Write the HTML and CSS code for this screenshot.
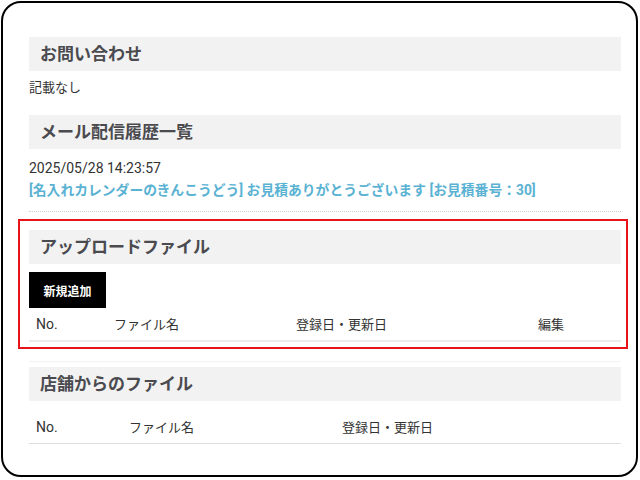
FILE: index.html
```html
<!DOCTYPE html>
<html lang="ja">
<head>
    <meta charset="utf-8">
    <title>マイページ</title>
    <link rel="stylesheet" href="styles.css">
</head>
<body>
    <div class="frame">
        <!-- お問い合わせ -->
        <div class="section">
            <h2 class="sec-title">お問い合わせ</h2>
            <p class="note">記載なし</p>
        </div>

        <!-- メール配信履歴 -->
        <div class="section mail-list">
            <h2 class="sec-title">メール配信履歴一覧</h2>
            <div class="mail-item">
                <div class="mail-date">2025/05/28 14:23:57</div>
                <a class="mail-link" href="#">[名入れカレンダーのきんこうどう] お見積ありがとうございます [お見積番号：30]</a>
            </div>
        </div>

        <!-- アップロードファイル -->
        <div class="section upload highlight">
            <h2 class="sec-title">アップロードファイル</h2>
            <button class="btn-add" type="button">新規追加</button>
            <div class="file-head upload-cols">
                <span class="num">No.</span>
                <span>ファイル名</span>
                <span>登録日・更新日</span>
                <span>編集</span>
            </div>
        </div>

        <!-- 店舗からのファイル -->
        <div class="section shop">
            <h2 class="sec-title">店舗からのファイル</h2>
            <div class="file-head shop-cols">
                <span class="num">No.</span>
                <span>ファイル名</span>
                <span>登録日・更新日</span>
            </div>
        </div>
    </div>
</body>
</html>
```

FILE: styles.css
```css
html, body {
    margin: 0;
    background-color: #fff;
}

body {
    font-family: Roboto, "Noto Sans CJK JP", sans-serif;
    font-size: 13px;
    color: #333;
}

.frame {
    margin: 1px 2px 2px 1px;
    height: 476px;
    box-sizing: border-box;
    border: 2px solid #000;
    border-radius: 20px;
    padding: 34px 15px 0 26px;
    overflow: hidden;
}

.sec-title {
    margin: 0;
    height: 34px;
    line-height: 34px;
    padding-left: 11px;
    background-color: #f2f2f2;
    font-size: 17px;
    font-weight: bold;
    color: #4a4a4f;
}

.note {
    margin: 7px 0 0;
    line-height: 20px;
}

.mail-list {
    margin-top: 17px;
}

.mail-item {
    padding: 8px 0 10px;
    border-bottom: 1px dotted #cfcfcf;
}

.mail-date {
    line-height: 22px;
    font-size: 14px;
}

.mail-link {
    display: block;
    line-height: 22px;
    color: #5ab2d3;
    font-weight: bold;
    text-decoration: none;
    font-size: 13.8px;
}

/* red box around upload area */
.highlight {
    margin: 7px -7px 0 -11px;
    border: 2px solid #e8141b;
    padding: 9px 5px 5px 9px;
}

.btn-add {
    display: block;
    margin-top: 8px;
    width: 77px;
    height: 36px;
    border: 0;
    background-color: #000;
    color: #fff;
    font-family: inherit;
    font-size: 12px;
    font-weight: bold;
    padding: 0;
}

.file-head {
    display: grid;
    height: 32px;
    line-height: 32px;
    align-items: baseline;
    padding-left: 7px;
}

.num {
    font-size: 14px;
}

.upload-cols {
    grid-template-columns: 78px 182px 242px 1fr;
    border-bottom: 2px solid #ececec;
}

.shop {
    margin-top: 12px;
    padding-top: 5px;
    border-top: 1px solid #f3f3f3;
}

.shop-cols {
    margin-top: 10px;
    grid-template-columns: 93px 213px 1fr;
    border-bottom: 1px solid #dedede;
}
```
